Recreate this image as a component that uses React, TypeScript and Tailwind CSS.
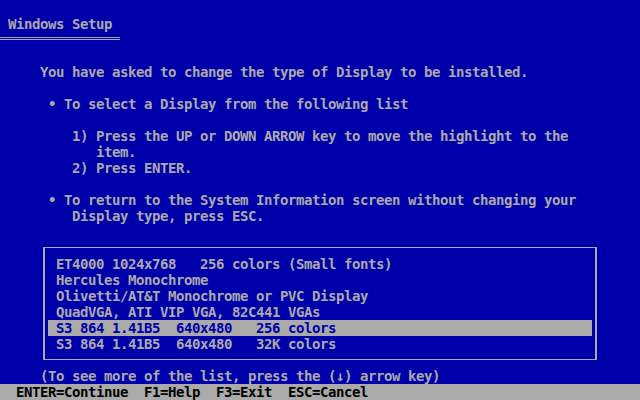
import React from 'react';

const items = [
  'ET4000 1024x768   256 colors (Small fonts)',
  'Hercules Monochrome',
  'Olivetti/AT&T Monochrome or PVC Display',
  'QuadVGA, ATI VIP VGA, 82C441 VGAs',
  'S3 864 1.41B5  640x480   256 colors',
  'S3 864 1.41B5  640x480   32K colors',
];
const selected = 4;

function Row({ className = '', children }: { className?: string; children?: React.ReactNode }) {
  return <div className={`h-4 whitespace-pre ${className}`}>{children}</div>;
}

export default function App() {
  return (
    <div className="w-[640px] h-[400px] overflow-hidden bg-[#0000aa] text-[#aaaaaa] font-['DejaVu_Sans_Mono',monospace] font-bold text-[14px] leading-4 tracking-[-0.43px] flex flex-col">
      <Row />
      <Row className="pl-2">Windows Setup</Row>
      <Row>
        {/* double underline under the title */}
        <div className="mt-[5px] w-[120px] h-[3px] border-y border-[#aaaaaa]" />
      </Row>
      <Row />
      <Row className="pl-10">You have asked to change the type of Display to be installed.</Row>
      <Row />
      <Row className="pl-12">• To select a Display from the following list</Row>
      <Row />
      <Row className="pl-[72px]">1) Press the UP or DOWN ARROW key to move the highlight to the</Row>
      <Row className="pl-24">item.</Row>
      <Row className="pl-[72px]">2) Press ENTER.</Row>
      <Row />
      <Row className="pl-12">• To return to the System Information screen without changing your</Row>
      <Row className="pl-[72px]">Display type, press ESC.</Row>
      <Row />

      {/* list box */}
      <div className="h-[128px] pt-[7px]">
        <div className="ml-[43px] w-[554px] h-[113px] border-x-2 border-y border-[#aaaaaa] pt-2 pl-[3px]">
          {items.map((it, i) => (
            <div
              key={it}
              className={`w-[544px] h-4 pl-2 whitespace-pre ${i === selected ? 'bg-[#aaaaaa] text-[#0000aa]' : ''}`}
            >
              {it}
            </div>
          ))}
        </div>
      </div>

      <Row className="pl-10">(To see more of the list, press the (↓) arrow key)</Row>
      <Row className="pl-4 bg-[#aaaaaa] text-black">ENTER=Continue  F1=Help  F3=Exit  ESC=Cancel</Row>
    </div>
  );
}
